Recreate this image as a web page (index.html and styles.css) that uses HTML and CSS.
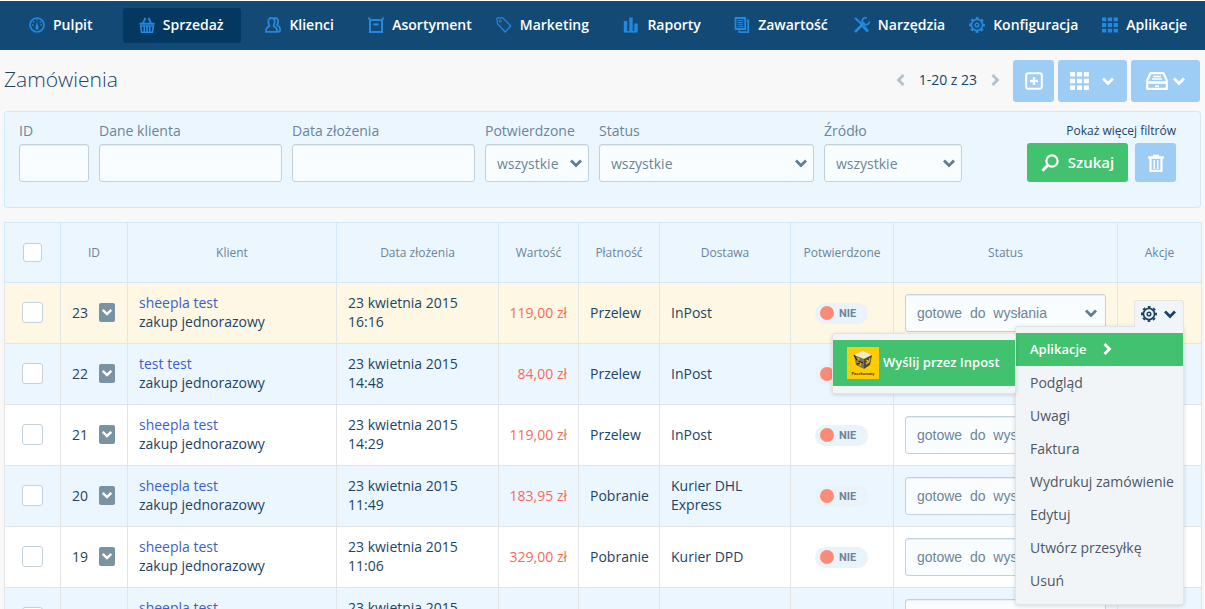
FILE: index.html
```
<!DOCTYPE html>
<html lang="pl">
<head>
<meta charset="utf-8">
<meta name="viewport" content="width=device-width, initial-scale=1">
<title>Zamówienia</title>
<link rel="stylesheet" href="styles.css">
</head>
<body>
<svg class="sprite" aria-hidden="true">
  <symbol id="i-chevron" viewBox="0 0 14 14"><path d="M2 4.500l5 5 5-5" fill="none" stroke="currentColor" stroke-width="2.800"/></symbol>
  <symbol id="i-gear" viewBox="0 0 16 16"><circle cx="8" cy="8" r="5.600" fill="none" stroke="currentColor" stroke-width="1.800"/><circle cx="8" cy="8" r="7" fill="none" stroke="currentColor" stroke-width="2" stroke-dasharray="2.750 2.750" stroke-dashoffset="1.400"/><circle cx="8" cy="8" r="1.800" fill="none" stroke="currentColor" stroke-width="1.500"/></symbol>
  <symbol id="i-grid" viewBox="0 0 17 16"><path d="M0 0h4.500v4H0zM6.200 0h4.500v4H6.200zM12.400 0h4.500v4h-4.500zM0 6h4.500v4H0zM6.200 6h4.500v4H6.200zM12.400 6h4.500v4h-4.500zM0 12h4.500v4H0zM6.200 12h4.500v4H6.200zM12.400 12h4.500v4h-4.500z" fill="currentColor"/></symbol>
</svg>

<nav class="nav" aria-label="Menu główne">
  <a class="nav-link" href="#"><svg class="nav-icon" viewBox="0 0 16 16"><circle cx="8" cy="8" r="7" fill="none" stroke="currentColor" stroke-width="1.700"/><path d="M8 4.500l1.500 6a1.600 1.600 0 1 1-3 0z" fill="currentColor"/><path d="M3 8h1.500M4.200 4.500l1 1M8 2.300v1.300M11.800 4.500l-1 1M11.500 8H13" stroke="currentColor" stroke-width="1.500"/></svg>Pulpit</a>
  <a class="nav-link nav-link-active" href="#" aria-current="page"><svg class="nav-icon" viewBox="0 0 16 16"><path d="M4 6.500L6.300.8M12 6.500L9.700.8M.5 6.800h15" fill="none" stroke="currentColor" stroke-width="1.900"/><path d="M1.600 9l1 6.200h10.800l1-6.200zM5.300 9v6M8 9v6M10.700 9v6" fill="none" stroke="currentColor" stroke-width="1.600"/></svg>Sprzedaż</a>
  <a class="nav-link" href="#"><svg class="nav-icon" viewBox="0 0 16 16"><path d="M6.500 1c2 0 3.200 1.400 3.200 3.500S8.500 8.800 8.500 8.800s.2 1 2 1.600c1.200.5 1.500 1.600 1.500 4.400H1c0-2.800.3-3.900 1.500-4.400 1.800-.6 2-1.600 2-1.600S3.300 6.600 3.300 4.500 4.500 1 6.500 1zM9.500 1c2.200-.2 3.700 1.200 3.700 3.300s-1.200 3.700-1.200 3.700 2.800 1.400 3 3.500c.2 1.700 0 3-.8 3.200h-1.500" fill="none" stroke="currentColor" stroke-width="1.800"/></svg>Klienci</a>
  <a class="nav-link" href="#"><svg class="nav-icon" viewBox="0 0 16 16"><path d="M.3.5L2.200 3h11.600L15.700.5M2 3v12h12V3" fill="none" stroke="currentColor" stroke-width="2"/><path d="M5.500 7.500h5" stroke="currentColor" stroke-width="2.200"/></svg>Asortyment</a>
  <a class="nav-link" href="#"><svg class="nav-icon" viewBox="0 0 16 16"><path d="M.8 1.800l1.200-1h4.800l8 8.200-5.600 6L1.600 7z" fill="none" stroke="currentColor" stroke-width="1.200"/><circle cx="4.300" cy="4" r="1.100" fill="none" stroke="currentColor"/></svg>Marketing</a>
  <a class="nav-link" href="#"><svg class="nav-icon" viewBox="0 0 16 16"><path d="M2.500 4v10M8 .5V14M13 6.500V14" stroke="currentColor" stroke-width="3.400"/><path d="M1 14.800h13.500" stroke="currentColor" stroke-width="1.600"/></svg>Raporty</a>
  <a class="nav-link" href="#"><svg class="nav-icon" viewBox="0 0 16 16"><path d="M1.500 1h9.700v11H1.500zM12.800 3.500h1.400v11.700h-9V13.500" fill="none" stroke="currentColor" stroke-width="1.800"/><path d="M3.500 3.500h5.800M3.500 5.600h5.800M3.500 7.700h5.800M3.500 9.800h5.800" stroke="currentColor" stroke-width="1.100"/></svg>Zawartość</a>
  <a class="nav-link" href="#"><svg class="nav-icon" viewBox="0 0 16 16"><path d="M1 1l4.500 4 2.500 3" fill="none" stroke="currentColor" stroke-width="2"/><path d="M9 9l5 5.500" stroke="currentColor" stroke-width="3"/><path d="M1 15l9.500-9.500" stroke="currentColor" stroke-width="2.600"/><path d="M13 .8a3.600 3.600 0 1 0 2.400 3.700" fill="none" stroke="currentColor" stroke-width="1.800"/></svg>Narzędzia</a>
  <a class="nav-link" href="#"><svg class="nav-icon"><use href="#i-gear"/></svg>Konfiguracja</a>
  <a class="nav-link" href="#"><svg class="nav-icon"><use href="#i-grid"/></svg>Aplikacje</a>
</nav>

<main class="page">
  <header class="page-head">
    <h1 class="page-title">Zamówienia</h1>
    <div class="pager">
      <button class="pager-button" type="button" aria-label="Poprzednia strona"><svg class="chevron chevron-left"><use href="#i-chevron"/></svg></button>
      <span>1-20 z 23</span>
      <button class="pager-button" type="button" aria-label="Następna strona"><svg class="chevron chevron-right"><use href="#i-chevron"/></svg></button>
    </div>
    <div class="toolbar">
      <button class="tool tool-square" type="button" aria-label="Dodaj"><svg class="icon-add" viewBox="0 0 18 18"><rect x="1.200" y="1.200" width="15.600" height="15.600" rx="2" fill="none" stroke="currentColor" stroke-width="2"/><path d="M9 5v8M5 9h8" stroke="currentColor" stroke-width="2.400"/></svg></button>
      <button class="tool tool-wide" type="button" aria-label="Akcje grupowe"><svg class="icon-grid"><use href="#i-grid"/></svg><svg class="chevron"><use href="#i-chevron"/></svg></button>
      <button class="tool tool-wide tool-tight" type="button" aria-label="Eksport"><svg class="icon-drawer" viewBox="0 0 22 18"><path d="M4.500 1.200h13l3.300 7.300v8.300H1.200V8.500z" fill="none" stroke="currentColor" stroke-width="2.200" stroke-linejoin="round"/><path d="M7 4.500h8M6 7h10" stroke="currentColor" stroke-width="1.300"/><path d="M2 10.500h18" stroke="currentColor" stroke-width="2.600"/><path d="M9 14.200h4" stroke="currentColor" stroke-width="1.800"/></svg><svg class="chevron"><use href="#i-chevron"/></svg></button>
    </div>
  </header>

  <form class="filters">
    <div class="field"><label for="f-id">ID</label><input class="control" id="f-id" type="text"></div>
    <div class="field"><label for="f-client">Dane klienta</label><input class="control" id="f-client" type="text"></div>
    <div class="field"><label for="f-date">Data złożenia</label><input class="control" id="f-date" type="text"></div>
    <div class="field"><label for="f-confirmed">Potwierdzone</label><div class="select"><select class="control" id="f-confirmed"><option>wszystkie</option></select><svg class="chevron"><use href="#i-chevron"/></svg></div></div>
    <div class="field"><label for="f-status">Status</label><div class="select"><select class="control" id="f-status"><option>wszystkie</option></select><svg class="chevron"><use href="#i-chevron"/></svg></div></div>
    <div class="field"><label for="f-source">Źródło</label><div class="select"><select class="control" id="f-source"><option>wszystkie</option></select><svg class="chevron"><use href="#i-chevron"/></svg></div></div>
    <div class="filter-actions">
      <a class="more-filters" href="#">Pokaż więcej filtrów</a>
      <div class="filter-buttons">
        <button class="search" type="submit"><svg class="icon-search" viewBox="0 0 18 18"><circle cx="11" cy="7" r="5.600" fill="none" stroke="currentColor" stroke-width="2.200"/><path d="M7 11l-5.500 5.700" stroke="currentColor" stroke-width="3"/></svg>Szukaj</button>
        <button class="tool clear" type="reset" aria-label="Wyczyść filtry"><svg class="icon-trash" viewBox="0 0 18 18"><path d="M1 3.500h16M6 2h6" stroke="currentColor" stroke-width="2.400"/><path d="M3.500 4v12.800h11V4" fill="none" stroke="currentColor" stroke-width="2.200"/><path d="M7.300 6v9M10.700 6v9" stroke="currentColor" stroke-width="1.500"/></svg></button>
      </div>
    </div>
  </form>

  <table class="orders">
    <colgroup><col class="c-check"><col class="c-id"><col class="c-client"><col class="c-date"><col class="c-value"><col class="c-payment"><col class="c-delivery"><col class="c-confirmed"><col class="c-status"><col class="c-actions"></colgroup>
    <thead>
      <tr><th><input class="check check-all" type="checkbox" aria-label="Zaznacz wszystkie"></th><th>ID</th><th>Klient</th><th>Data złożenia</th><th>Wartość</th><th>Płatność</th><th>Dostawa</th><th>Potwierdzone</th><th>Status</th><th>Akcje</th></tr>
    </thead>
    <tbody>
      <tr class="row-current">
        <td class="cell-check"><input class="check" type="checkbox" aria-label="Zaznacz 23"></td>
        <td><div class="order-id">23<button class="expand" type="button" aria-label="Rozwiń 23"><svg class="chevron"><use href="#i-chevron"/></svg></button></div></td>
        <td><a class="client" href="#">sheepla test</a>zakup jednorazowy</td>
        <td>23 kwietnia 2015<br>16:16</td><td class="price">119,00 zł</td><td>Przelew</td><td>InPost</td>
        <td class="cell-badge"><span class="badge">NIE</span></td>
        <td class="cell-status"><div class="select"><select class="control status" aria-label="Status 23"><option>gotowe&nbsp; do&nbsp; wysłania</option></select><svg class="chevron"><use href="#i-chevron"/></svg></div></td>
        <td class="actions">
          <div class="menu-anchor">
            <button class="menu-toggle" type="button" aria-label="Akcje" aria-expanded="true"><svg class="icon-gear"><use href="#i-gear"/></svg><svg class="chevron"><use href="#i-chevron"/></svg></button>
            <ul class="menu">
              <li><a class="menu-link menu-link-active" href="#">Aplikacje<svg class="chevron chevron-right"><use href="#i-chevron"/></svg></a></li>
              <li><a class="menu-link" href="#">Podgląd</a></li>
              <li><a class="menu-link" href="#">Uwagi</a></li>
              <li><a class="menu-link" href="#">Faktura</a></li>
              <li><a class="menu-link" href="#">Wydrukuj zamówienie</a></li>
              <li><a class="menu-link" href="#">Edytuj</a></li>
              <li><a class="menu-link" href="#">Utwórz przesyłkę</a></li>
              <li><a class="menu-link" href="#">Usuń</a></li>
            </ul>
            <div class="submenu"><a class="submenu-link" href="#"><svg class="inpost" viewBox="0 0 32 32"><path d="M0 0h32v32H0z" fill="#fc0"/><path d="M7 8l9-4 9 4-8 4z" fill="#eee9d8"/><path d="M7 8l10 4v10l-8-4z" fill="#77735f"/><path d="M25 8l-8 4v10l6-4z" fill="#4d4838"/><path d="M9 11l3 1-1 3 3 1-1 3M19 13l2 1-2 3 3-2 1-4" fill="none" stroke="#e8b90c" stroke-width="1.200"/><path d="M7 8l3 5M11 14l5 2M10 17l3-1" stroke="#24221c" stroke-width="1.200"/><text class="inpost-name" x="16" y="28" text-anchor="middle">Paczkomaty</text></svg>Wyślij przez Inpost</a></div>
          </div>
        </td>
      </tr>
      <tr>
        <td class="cell-check"><input class="check" type="checkbox" aria-label="Zaznacz 22"></td>
        <td><div class="order-id">22<button class="expand" type="button" aria-label="Rozwiń 22"><svg class="chevron"><use href="#i-chevron"/></svg></button></div></td>
        <td><a class="client" href="#">test test</a>zakup jednorazowy</td>
        <td>23 kwietnia 2015<br>14:48</td><td class="price">84,00 zł</td><td>Przelew</td><td>InPost</td>
        <td class="cell-badge"><span class="badge" role="img" aria-label="NIE"></span></td>
        <td class="cell-status"><div class="select"><select class="control status" aria-label="Status 22"><option>gotowe&nbsp; do&nbsp; wysłania</option></select><svg class="chevron"><use href="#i-chevron"/></svg></div></td>
        <td></td>
      </tr>
      <tr>
        <td class="cell-check"><input class="check" type="checkbox" aria-label="Zaznacz 21"></td>
        <td><div class="order-id">21<button class="expand" type="button" aria-label="Rozwiń 21"><svg class="chevron"><use href="#i-chevron"/></svg></button></div></td>
        <td><a class="client" href="#">sheepla test</a>zakup jednorazowy</td>
        <td>23 kwietnia 2015<br>14:29</td><td class="price">119,00 zł</td><td>Przelew</td><td>InPost</td>
        <td class="cell-badge"><span class="badge">NIE</span></td>
        <td class="cell-status"><div class="select"><select class="control status" aria-label="Status 21"><option>gotowe&nbsp; do&nbsp; wysłania</option></select><svg class="chevron"><use href="#i-chevron"/></svg></div></td>
        <td></td>
      </tr>
      <tr>
        <td class="cell-check"><input class="check" type="checkbox" aria-label="Zaznacz 20"></td>
        <td><div class="order-id">20<button class="expand" type="button" aria-label="Rozwiń 20"><svg class="chevron"><use href="#i-chevron"/></svg></button></div></td>
        <td><a class="client" href="#">sheepla test</a>zakup jednorazowy</td>
        <td>23 kwietnia 2015<br>11:49</td><td class="price">183,95 zł</td><td>Pobranie</td><td>Kurier DHL Express</td>
        <td class="cell-badge"><span class="badge">NIE</span></td>
        <td class="cell-status"><div class="select"><select class="control status" aria-label="Status 20"><option>gotowe&nbsp; do&nbsp; wysłania</option></select><svg class="chevron"><use href="#i-chevron"/></svg></div></td>
        <td></td>
      </tr>
      <tr>
        <td class="cell-check"><input class="check" type="checkbox" aria-label="Zaznacz 19"></td>
        <td><div class="order-id">19<button class="expand" type="button" aria-label="Rozwiń 19"><svg class="chevron"><use href="#i-chevron"/></svg></button></div></td>
        <td><a class="client" href="#">sheepla test</a>zakup jednorazowy</td>
        <td>23 kwietnia 2015<br>11:06</td><td class="price">329,00 zł</td><td>Pobranie</td><td>Kurier DPD</td>
        <td class="cell-badge"><span class="badge">NIE</span></td>
        <td class="cell-status"><div class="select"><select class="control status" aria-label="Status 19"><option>gotowe&nbsp; do&nbsp; wysłania</option></select><svg class="chevron"><use href="#i-chevron"/></svg></div></td>
        <td></td>
      </tr>
      <tr>
        <td class="cell-check"><input class="check" type="checkbox" aria-label="Zaznacz zamówienie"></td>
        <td></td>
        <td class="cell-top"><a class="client" href="#">sheepla test</a></td>
        <td class="cell-top">23 kwietnia 2015</td><td></td><td></td><td></td><td></td>
        <td class="cell-status"><div class="select"><select class="control status" aria-label="Status zamówienia"><option></option></select></div></td>
        <td></td>
      </tr>
    </tbody>
  </table>
</main>
</body>
</html>
```
FILE: styles.css
```
*, *::before, *::after { box-sizing: border-box; }

body {
  margin: 0;
  height: 100vh;
  display: flex;
  flex-direction: column;
  overflow: hidden;
  border-top: 1px solid #fff;
  background: #f8f8f8;
  color: #1c4467;
  font: 14px/19px "Open Sans", "Noto Sans", sans-serif;
}

a { color: inherit; text-decoration: none; }
button, input, select { margin: 0; font: inherit; color: inherit; }
button { padding: 0; border: 0; background: none; cursor: pointer; }
svg { display: block; flex: none; }
.sprite { position: absolute; width: 0; height: 0; }

.chevron { width: 14px; height: 14px; }
.chevron-left { transform: rotate(90deg); }
.chevron-right { transform: rotate(-90deg); }

/* Main navigation */
.nav {
  display: grid;
  grid-template-columns: 111fr 128fr 104fr 124fr 129fr 112fr 121fr 112fr 131fr 120fr;
  flex: none;
  align-items: center;
  height: 49px;
  padding-left: 13px;
  background: #124a75;
}
.nav-link {
  display: flex;
  align-items: center;
  justify-self: start;
  gap: 8px;
  height: 35px;
  padding: 0 8px 2px 16px;
  border-radius: 3px;
  color: #fff;
  font-weight: 600;
  white-space: nowrap;
}
.nav-link-active { padding-right: 17px; background: #033961; }
.nav-icon { width: 16px; height: 16px; color: #2488df; }

/* Heading and toolbar */
.page { flex: 1; min-height: 0; padding: 0 4px; }
.page-head { display: flex; align-items: center; height: 61px; padding-right: 1px; }
.page-title { flex: 1; margin: 0; padding-bottom: 4px; font-size: 21px; font-weight: 300; line-height: 28px; }
.pager { display: flex; align-items: center; gap: 11px; margin-right: 11px; padding-bottom: 2px; font-size: 14px; }
.pager-button { color: #b4c1cb; }
.toolbar { display: flex; gap: 4px; }
.tool {
  display: flex;
  align-items: center;
  justify-content: center;
  height: 42px;
  border-radius: 3px;
  background: #9dcdf5;
  color: #fff;
}
.tool-square { width: 41px; }
.tool-wide { width: 69px; gap: 12px; }
.tool-tight { gap: 4px; }
.icon-add { width: 18px; height: 18px; }
.icon-grid { width: 19px; height: 18px; }
.icon-drawer { width: 22px; height: 18px; }

/* Filters */
.filters {
  display: grid;
  grid-template-columns: 70fr 183fr 183fr 104fr 215fr 138fr 204fr;
  column-gap: 10px;
  padding: 9px 24px 25px 14px;
  border: 1px solid #d3e8f7;
  border-radius: 3px;
  background: #ebf6ff;
}
.field { display: grid; gap: 4px; align-content: start; min-width: 0; color: #6c8599; }
.control {
  display: block;
  width: 100%;
  height: 38px;
  padding: 0 11px;
  border: 1px solid #c3d1de;
  border-radius: 3px;
  background: #fafdff;
  box-shadow: inset 0 1px 1px #e6edf2;
  color: #6c8599;
  appearance: none;
}
.select { display: grid; grid-template-columns: minmax(0, 1fr) 20px; align-items: center; color: #5f7d93; }
.select > .control { grid-area: 1 / 1 / 2 / 3; }
.select > .chevron { grid-area: 1 / 2; pointer-events: none; }
.filter-actions { display: flex; flex-direction: column; align-items: flex-end; gap: 3px; }
.more-filters { font-size: 12px; }
.filter-buttons { display: flex; gap: 7px; }
.search {
  display: flex;
  align-items: center;
  justify-content: center;
  gap: 9px;
  width: 101px;
  height: 39px;
  border-radius: 3px;
  background: #42c16f;
  color: #fff;
  font-size: 15px;
  font-weight: 600;
}
.icon-search { width: 18px; height: 18px; }
.clear { width: 41px; height: 39px; }
.icon-trash { width: 18px; height: 18px; }

/* Orders table */
.orders {
  width: 100%;
  margin-top: 14px;
  border-collapse: collapse;
  table-layout: fixed;
  background: #fff;
}
.c-check { width: 56px; }
.c-id { width: 67px; }
.c-client { width: 209px; }
.c-date { width: 162px; }
.c-value { width: 80px; }
.c-payment { width: 81px; }
.c-delivery { width: 131px; }
.c-confirmed { width: 103px; }
.c-status { width: 224px; }
.c-actions { width: 84px; }
.orders th {
  height: 60px;
  padding: 0;
  border: 1px solid #d3e8f7;
  background: #ebf6ff;
  color: #6c8599;
  font-size: 12px;
  font-weight: 400;
}
.orders td { height: 61px; padding: 0 11px 2px; border: 1px solid #e2e4e6; }
.orders tbody tr:nth-child(even) { background: #ebf6ff; }
.orders .row-current { background: #fdf7e3; }
.orders .cell-check { padding: 0 0 2px; }
.orders .cell-status { padding-bottom: 0; }
.orders .cell-status .select { grid-template-columns: minmax(0, 1fr) 22px; }
.orders .cell-top { padding-top: 10px; vertical-align: top; }
.orders .price { padding-left: 0; color: #f96a5b; text-align: right; white-space: nowrap; }
.client { display: block; color: #3f5fc9; }
.check {
  display: block;
  width: 21px;
  height: 21px;
  margin: 0 auto;
  border: 1px solid #c3d1de;
  border-radius: 3px;
  background: #fff;
  appearance: none;
}
.check-all { width: 19px; height: 19px; }
.order-id { display: flex; align-items: center; gap: 11px; }
.expand {
  display: grid;
  place-items: center;
  width: 16px;
  height: 19px;
  border-radius: 2px;
  background: #7a93a3;
  color: #fff;
}
.expand .chevron { width: 12px; height: 12px; }
.orders .cell-badge { padding: 0 13px 0 24px; }
.badge {
  display: flex;
  align-items: center;
  gap: 5px;
  width: 53px;
  height: 21px;
  padding-left: 5px;
  border-radius: 10px;
  background: #ebf3fa;
  color: #6c8599;
  font: bold 11px/21px Roboto, sans-serif;
}
.badge::before { content: ""; width: 14px; height: 14px; border-radius: 50%; background: #fa8b76; }
.status { font-family: "Liberation Sans", sans-serif; }

/* Row menu */
.orders .actions { padding: 0 17px 0 0; }
.menu-anchor { position: relative; z-index: 1; width: 50px; margin-left: auto; }
.menu-toggle {
  position: relative;
  z-index: 2;
  display: flex;
  align-items: center;
  justify-content: center;
  gap: 6px;
  width: 100%;
  height: 27px;
  border: 1px solid #e2e4e6;
  border-bottom: 0;
  border-radius: 3px 3px 0 0;
  background: #f2f5f8;
}
.icon-gear { width: 16px; height: 16px; }
.menu, .submenu {
  position: absolute;
  margin: 0;
  padding: 6px 0 7px;
  border: 1px solid #e2e4e6;
  border-radius: 3px;
  background: #f2f5f8;
  box-shadow: 0 1px 4px #00000026;
  white-space: nowrap;
}
.menu { top: 26px; right: 0; width: 169px; list-style: none; }
.menu-link { display: flex; align-items: center; gap: 13px; height: 33px; padding: 0 14px; color: #4b5865; font-size: 14px; }
.menu-link-active { background: #42c16f; color: #fff; font-size: 13px; font-weight: 600; }
.submenu { top: 33px; right: 168px; width: 184px; }
.submenu-link {
  display: flex;
  align-items: center;
  gap: 4px;
  height: 46px;
  padding-left: 14px;
  background: #42c16f;
  color: #fff;
  font-size: 13px;
  font-weight: 600;
}
.inpost { width: 32px; height: 32px; }
.inpost-name { font: bold 4px "Liberation Sans", sans-serif; fill: #40320a; }
```
